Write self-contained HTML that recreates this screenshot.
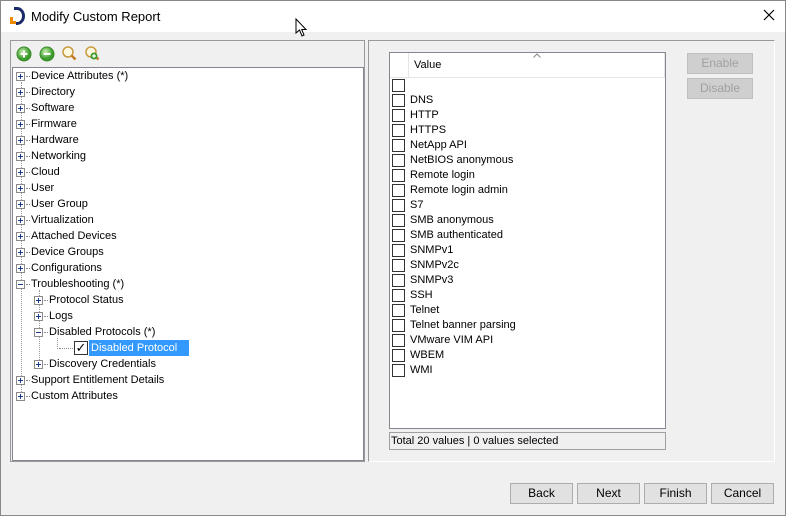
<!DOCTYPE html>
<html><head><meta charset="utf-8"><style>
*{box-sizing:border-box;margin:0;padding:0}
body{width:786px;height:516px;overflow:hidden;background:#f0f0f0;font-family:"Liberation Sans",sans-serif;font-size:11px;color:#000;position:relative}
.abs{position:absolute}
.title{left:0;top:0;width:786px;height:32px;background:#fff;border-top:1px solid #888}
.tree-row{position:absolute;height:16px;line-height:16px;white-space:nowrap}
.pm{position:absolute;width:9px;height:9px;border:1px solid #8a8a8a;background:#fff;top:4px}
.pm:before{content:"";position:absolute;left:1px;top:3px;width:5px;height:1px;background:#1a3a8a}
.pm.p:after{content:"";position:absolute;left:3px;top:1px;width:1px;height:5px;background:#1a3a8a}
.dots{position:absolute;border-top:1px dotted #888;height:0;top:8px}
.vdots{position:absolute;border-left:1px dotted #999;width:0}
.row{position:absolute;left:392px;height:15px;line-height:15px;white-space:nowrap}
.cb{position:absolute;left:0;top:1px;width:13px;height:13px;border:1px solid #333;background:#fff}
.row span{position:absolute;left:18px;top:0}
.btn{position:absolute;height:21px;border:1px solid #adadad;background:#e1e1e1;text-align:center;line-height:19px;font-size:12px}
.dis{color:#a0a0a0;background:#cfcfcf;border-color:#bfbfbf}
</style></head><body>
<div class="abs title"></div>
<div class="abs" style="left:0;top:0;width:1px;height:516px;background:#888"></div>
<div class="abs" style="left:785px;top:0;width:1px;height:516px;background:#888"></div>
<div class="abs" style="left:0;top:515px;width:786px;height:1px;background:#888"></div>
<svg class="abs" style="left:9px;top:7px" width="18" height="18">
<rect x="1" y="10" width="3" height="7" fill="#f08a00"/><rect x="1" y="14" width="6" height="3" fill="#f08a00"/>
<path d="M5 1.5 H8 A6.5 7.5 0 0 1 8 16.5 H7" fill="none" stroke="#1a2a6a" stroke-width="3"/>
</svg>
<div class="abs" style="left:31px;top:8px;font-size:13px;line-height:17px;color:#000">Modify Custom Report</div>
<svg class="abs" style="left:763px;top:9px" width="12" height="12"><path d="M1 1L11 11M11 1L1 11" stroke="#000" stroke-width="1.2"/></svg>
<svg class="abs" style="left:295px;top:18px" width="14" height="20"><path d="M1 1 L1 15 L4.5 12 L7 18 L9 17 L6.7 11.5 L11 11.5 Z" fill="#fff" stroke="#000" stroke-width="1"/></svg>

<div class="abs" style="left:10px;top:40px;width:355px;height:422px;border:1px solid #999"></div>
<svg class="abs" style="left:15px;top:45px" width="90" height="20">
<defs><radialGradient id="g" cx="40%" cy="35%"><stop offset="0" stop-color="#c8f0b0"/><stop offset="1" stop-color="#3a9a2a"/></radialGradient></defs>
<circle cx="9" cy="9" r="7" fill="url(#g)" stroke="#3a8a2a"/><path d="M5.5 9h7M9 5.5v7" stroke="#fff" stroke-width="2"/>
<circle cx="32" cy="9" r="7" fill="url(#g)" stroke="#3a8a2a"/><path d="M28.5 9h7" stroke="#fff" stroke-width="2"/>
<circle cx="53" cy="7" r="5" fill="#fff8e0" stroke="#c89a40" stroke-width="1.5"/><path d="M56.5 10.5l4 4" stroke="#c87a20" stroke-width="2.5"/>
<circle cx="76" cy="7" r="5" fill="#fff8e0" stroke="#c89a40" stroke-width="1.5"/><path d="M79.5 10.5l4 4" stroke="#c87a20" stroke-width="2.5"/><circle cx="79" cy="11" r="3.5" fill="#3a9a2a"/><path d="M77 11h4M79 9v4" stroke="#fff" stroke-width="1.2"/>
</svg>
<div class="abs" style="left:12px;top:67px;width:352px;height:394px;background:#fff;border:1px solid #828790">
<div class="vdots" style="left:8px;top:14px;height:316px"></div>
<div class="vdots" style="left:26px;top:222px;height:76px"></div>
<div class="vdots" style="left:44px;top:270px;height:11px"></div>
</div>
<div id="tree"></div>

<div class="abs" style="left:368px;top:40px;width:407px;height:422px;border:1px solid #999;border-right-color:#fff;border-bottom-color:#fff"></div>
<div class="abs" style="left:389px;top:52px;width:277px;height:377px;background:#fff;border:1px solid #828790"></div>
<div class="abs" style="left:390px;top:53px;width:275px;height:25px;border-bottom:1px solid #e5e5e5"></div>
<div class="abs" style="left:408px;top:53px;width:1px;height:25px;background:#e5e5e5"></div>
<div class="abs" style="left:664px;top:53px;width:1px;height:25px;background:#e5e5e5"></div>
<div class="abs" style="left:414px;top:59px;font-size:11px">Value</div>
<svg class="abs" style="left:533px;top:53px" width="8" height="5"><path d="M0.5 4.5L4 1L7.5 4.5" fill="none" stroke="#888"/></svg>
<div class="abs" style="left:389px;top:432px;width:277px;height:18px;border:1px solid #a0a0a0;background:#f0f0f0;line-height:16px;padding-left:1px">Total 20 values | 0 values selected</div>
<div id="rows"></div>
<div class="btn dis" style="left:687px;top:53px;width:66px">Enable</div>
<div class="btn dis" style="left:687px;top:78px;width:66px">Disable</div>

<div class="btn" style="left:510px;top:483px;width:63px">Back</div>
<div class="btn" style="left:577px;top:483px;width:63px">Next</div>
<div class="btn" style="left:644px;top:483px;width:63px">Finish</div>
<div class="btn" style="left:711px;top:483px;width:63px">Cancel</div>

<script>
var t=[[0,'p','Device Attributes (*)'],[0,'p','Directory'],[0,'p','Software'],[0,'p','Firmware'],[0,'p','Hardware'],[0,'p','Networking'],[0,'p','Cloud'],[0,'p','User'],[0,'p','User Group'],[0,'p','Virtualization'],[0,'p','Attached Devices'],[0,'p','Device Groups'],[0,'p','Configurations'],[0,'m','Troubleshooting (*)'],[1,'p','Protocol Status'],[1,'p','Logs'],[1,'m','Disabled Protocols (*)'],[2,'c','Disabled Protocol'],[1,'p','Discovery Credentials'],[0,'p','Support Entitlement Details'],[0,'p','Custom Attributes']];
var h='';
t.forEach(function(r,i){var y=68+i*16,x=16+r[0]*18;
if(r[1]=='c'){h+='<div class="tree-row" style="left:59px;top:'+y+'px"><div class="dots" style="left:0;width:14px"></div><div class="abs" style="left:15px;top:1px;width:14px;height:14px;border:1px solid #333;background:#fff;font-size:13px;line-height:12px;text-align:center">✓</div><span class="abs" style="left:30px;top:0;background:#3399ff;color:#fff;padding:0 2px;width:100px">Disabled Protocol</span></div>';}
else h+='<div class="tree-row" style="left:'+x+'px;top:'+y+'px"><div class="pm '+r[1]+'"></div><div class="dots" style="left:10px;width:4px"></div><span class="abs" style="left:15px;top:0">'+r[2]+'</span></div>';});
document.getElementById('tree').innerHTML=h;
var v=['','DNS','HTTP','HTTPS','NetApp API','NetBIOS anonymous','Remote login','Remote login admin','S7','SMB anonymous','SMB authenticated','SNMPv1','SNMPv2c','SNMPv3','SSH','Telnet','Telnet banner parsing','VMware VIM API','WBEM','WMI'];
h='';v.forEach(function(s,i){h+='<div class="row" style="top:'+(78+i*15)+'px"><div class="cb"></div><span>'+s+'</span></div>';});
document.getElementById('rows').innerHTML=h;
</script>
</body></html>
